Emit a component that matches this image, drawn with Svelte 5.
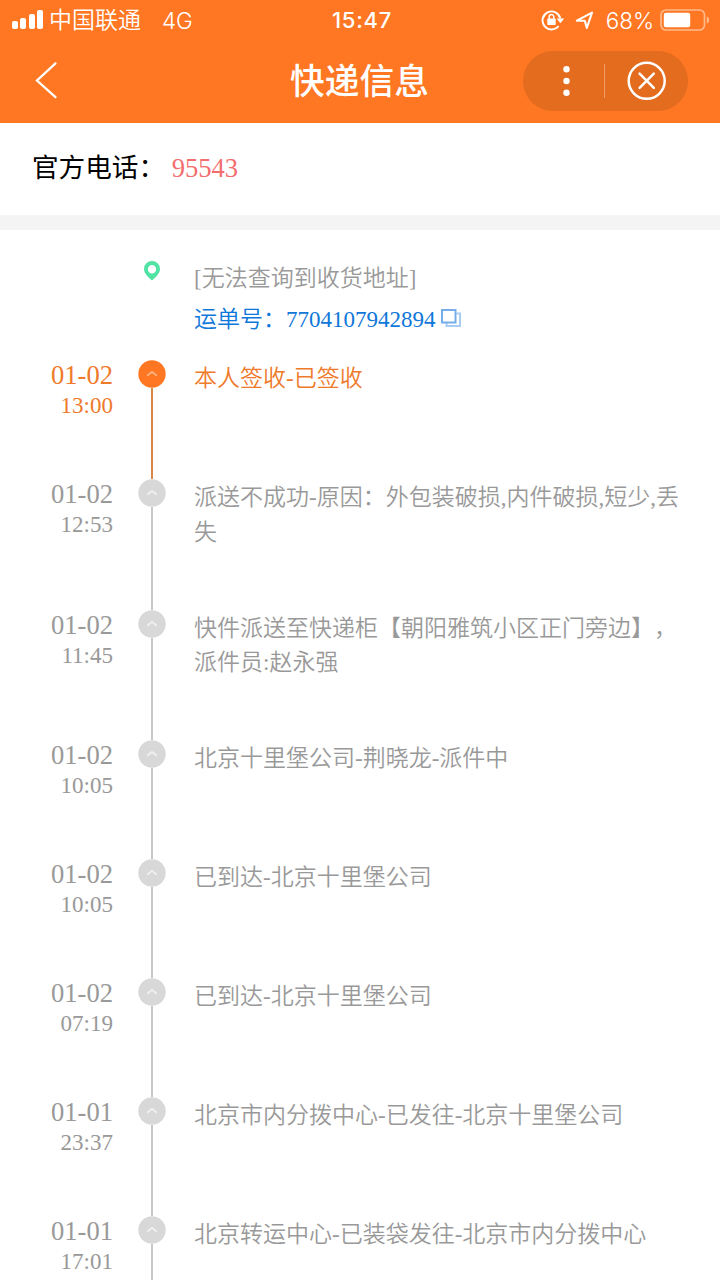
<script lang="ts">
	/**
	 * Express tracking page: courier phone, waybill number and delivery timeline
	 */

	interface TrackEvent {
		date: string;
		time: string;
		text: string;
	}

	const phone = '95543';
	const waybill = '7704107942894';
	const signal = [8, 11, 15, 19];

	const events: TrackEvent[] = [
		{ date: '01-02', time: '13:00', text: '本人签收-已签收' },
		{ date: '01-02', time: '12:53', text: '派送不成功-原因：外包装破损,内件破损,短少,丢失' },
		{ date: '01-02', time: '11:45', text: '快件派送至快递柜【朝阳雅筑小区正门旁边】，派件员:赵永强' },
		{ date: '01-02', time: '10:05', text: '北京十里堡公司-荆晓龙-派件中' },
		{ date: '01-02', time: '10:05', text: '已到达-北京十里堡公司' },
		{ date: '01-02', time: '07:19', text: '已到达-北京十里堡公司' },
		{ date: '01-01', time: '23:37', text: '北京市内分拨中心-已发往-北京十里堡公司' },
		{ date: '01-01', time: '17:01', text: '北京转运中心-已装袋发往-北京市内分拨中心' }
	];
</script>

<div class="page">
	<header>
		<div class="status">
			<div class="status-left">
				<span class="signal">
					{#each signal as height}
						<i style="height: {height}px"></i>
					{/each}
				</span>
				<span class="carrier">中国联通</span>
				<span class="network">4G</span>
			</div>
			<span class="clock">15:47</span>
			<div class="status-right">
				<svg class="lock" width="24" height="22" viewBox="0 0 24 22" fill="none" stroke="#fff" stroke-width="1.9">
					<path d="M17.6 17A9 9 0 1 1 19.3 9.4" />
					<path d="M15.6 9.4h7.6l-3.8 4.8z" fill="#fff" stroke="none" />
					<rect x="6.3" y="9.4" width="8.4" height="6.6" rx="0.8" fill="#fff" stroke="none" />
					<path d="M8.2 10V7.8a2.3 2.3 0 0 1 4.6 0v2.2" stroke-width="1.5" />
				</svg>
				<svg class="arrow" width="19" height="19" viewBox="0 0 19 19" fill="none" stroke="#fff" stroke-width="2.1" stroke-linejoin="round">
					<path d="M1.8 9.6 17 1.6 11.8 17 9.8 9.7z" />
				</svg>
				<span class="percent">68%</span>
				<svg width="50" height="22" viewBox="0 0 50 22">
					<rect x="1" y="1" width="43.5" height="20" rx="5" fill="none" stroke="#ffb98c" stroke-width="1.7" />
					<rect x="3.8" y="3.7" width="26.4" height="14.6" rx="2" fill="#fff" />
					<path d="M46.8 7.5c3.2.8 3.2 6.2 0 7z" fill="#ffb98c" />
				</svg>
			</div>
		</div>

		<div class="nav">
			<svg class="back" width="24" height="40" viewBox="0 0 24 40" fill="none" stroke="#fff" stroke-width="2.3" stroke-linecap="round">
				<path d="M20.5 2.4 2 19.5 20.5 36.2" />
			</svg>
			<h1>快递信息</h1>
			<div class="capsule">
				<svg width="165" height="60" viewBox="0 0 165 60" fill="none" stroke="#fff">
					<g fill="#fff" stroke="none">
						<circle cx="43.5" cy="18.3" r="3.2" />
						<circle cx="43.5" cy="30" r="3.2" />
						<circle cx="43.5" cy="41.7" r="3.2" />
					</g>
					<path d="M81.5 13v34" stroke="#f29c64" stroke-width="1" />
					<circle cx="123.7" cy="29.8" r="18" stroke-width="2.5" />
					<path d="m116.6 22.7 14.2 14.2m0-14.2-14.2 14.2" stroke-width="2.5" stroke-linecap="round" />
				</svg>
			</div>
		</div>
	</header>

	<section class="phone">
		<span class="label">官方电话<span class="colon">：</span></span>
		<span class="number">{phone}</span>
	</section>

	<main>
		<div class="summary">
			<svg class="pin" width="16" height="20" viewBox="0 0 16 20">
				<path
					fill="#50e3a4"
					fill-rule="evenodd"
					d="M8 0a8 8 0 0 1 8 8c0 4.5-4.5 8.5-8 11.5C4.5 16.5 0 12.5 0 8a8 8 0 0 1 8-8zm0 4a4.2 4.2 0 1 0 0 8.4A4.2 4.2 0 0 0 8 4z"
				/>
			</svg>
			<div class="address">[无法查询到收货地址]</div>
			<div class="waybill">
				<span>运单号：{waybill}</span>
				<svg width="20" height="18" viewBox="0 0 20 18" fill="none" stroke-width="2">
					<path d="M15.5 4.5H19V17H5.5v-3" stroke="#a9ccf3" />
					<rect x="1" y="1" width="13.5" height="12.5" stroke="#75aeea" />
				</svg>
			</div>
		</div>

		<ul>
			{#each events as event, i}
				<li class:active={i === 0}>
					<div class="when">
						<div class="date">{event.date}</div>
						<div class="time">{event.time}</div>
					</div>
					<div class="axis">
						<svg class="dot" width="28" height="28" viewBox="0 0 28 28">
							<circle cx="14" cy="14" r="13.7" />
							<path d="m9.2 15.8 4.8-4 4.8 4" />
						</svg>
						<span class="line"></span>
					</div>
					<div class="text">{event.text}</div>
				</li>
			{/each}
		</ul>
	</main>
</div>

<style>
	:global(body) {
		background: #fff;
		overflow: hidden;
	}

	.page {
		height: 1280px;
		overflow: hidden;
		background: #fff;
		color: #999;
		font-family: 'Liberation Serif', 'Noto Sans CJK SC', serif;
		font-size: 23px;
		font-weight: 350;
		text-spacing-trim: space-all;
	}

	header {
		height: 123px;
		background: #ff7722;
		color: #fff;
		font-family: Inter, 'Noto Sans CJK SC', sans-serif;
	}

	.status {
		display: grid;
		grid-template-columns: 1fr auto 1fr;
		align-items: center;
		height: 40px;
		padding: 0 10px 0 12px;
	}

	.status-left,
	.status-right {
		display: flex;
		align-items: center;
	}

	.status-right {
		justify-content: flex-end;
	}

	.signal {
		display: flex;
		align-items: flex-end;
		gap: 2.3px;
		height: 19px;
		margin: 0 6px 1px 0;
	}

	.signal i {
		width: 6px;
		border-radius: 2px;
		background: #fff;
	}

	.carrier {
		font-size: 23px;
		line-height: 40px;
	}

	.network {
		margin-left: 21px;
		font-size: 22.5px;
	}

	.clock {
		font-size: 22px;
		font-weight: 500;
		letter-spacing: 0.7px;
		margin-left: 2px;
	}

	.lock {
		margin-right: 10px;
	}

	.arrow {
		margin-right: 12px;
	}

	.percent {
		margin-right: 6px;
		font-size: 22.5px;
	}

	.nav {
		display: grid;
		grid-template-columns: 1fr auto 1fr;
		align-items: center;
		height: 82px;
		padding: 0 32px 0 35px;
	}

	h1 {
		margin: 0 4px 0 0;
		font-size: 34.7px;
		font-weight: 500;
		line-height: 50px;
	}

	.capsule {
		justify-self: end;
		width: 165px;
		height: 60px;
		border-radius: 30px;
		background: #e36c1f;
	}

	.capsule svg {
		display: block;
	}

	.phone {
		height: 92px;
		padding-left: 32px;
		border-bottom: 15px solid #f4f4f4;
		color: #000;
		font-size: 26.6px;
		line-height: 90px;
	}

	.label {
		font-weight: 400;
	}

	.colon {
		display: inline-block;
	}

	.number {
		color: #f36d6f;
	}

	.summary {
		display: grid;
		grid-template-columns: 16px 1fr;
		column-gap: 34px;
		padding: 29px 0 0 144px;
		line-height: 40px;
	}

	.pin {
		margin-top: 2px;
	}

	.waybill {
		display: flex;
		grid-column: 2;
		align-items: center;
		gap: 5px;
		padding-top: 1px;
		color: #0e77d9;
	}

	.waybill svg {
		margin-bottom: 4px;
	}

	ul {
		margin: 0;
		padding: 20px 0 0;
		list-style: none;
	}

	li {
		display: grid;
		grid-template-columns: 113px 28px 490px;
		column-gap: 25px;
	}

	.when {
		text-align: right;
		line-height: 30px;
	}

	.date {
		font-size: 26.6px;
	}

	.time {
		padding-top: 1px;
	}

	.axis {
		display: flex;
		flex-direction: column;
		align-items: center;
	}

	.dot {
		flex: none;
		fill: #d8d8d8;
	}

	.dot path {
		fill: none;
		stroke: #f0f0f0;
		stroke-width: 1.8;
	}

	.line {
		flex: 1;
		width: 2px;
		background: #c8c8c8;
	}

	.text {
		margin-left: 3px;
		padding: 2px 0 59.5px;
		min-height: 57.5px;
		line-height: 34.5px;
	}

	.active {
		color: #ef7a2b;
	}

	.active .dot {
		fill: #ff7722;
	}

	.active .dot path {
		stroke: #ffb585;
	}

	.active .line {
		background: #d98649;
	}
</style>
